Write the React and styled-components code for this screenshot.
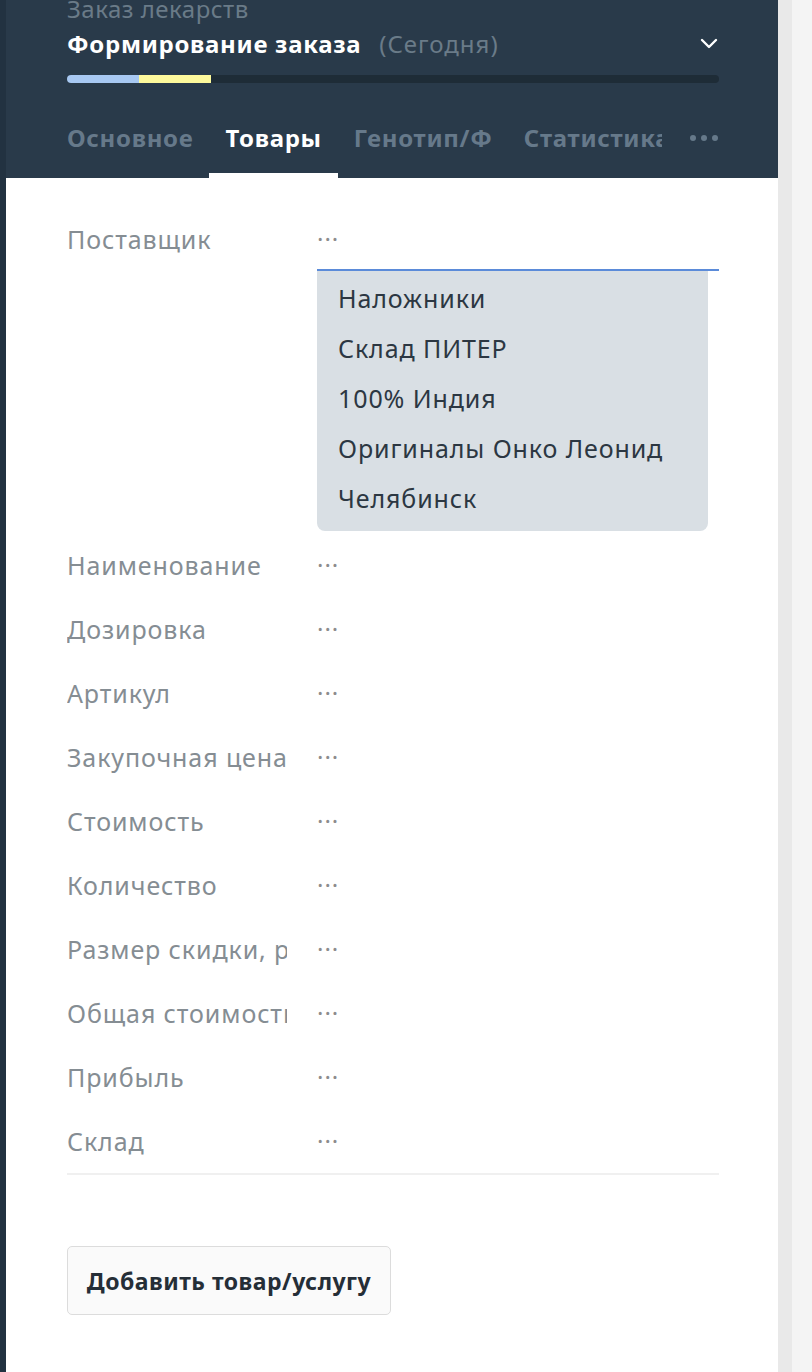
import React from 'react'
import styled, { createGlobalStyle } from 'styled-components'

const GlobalStyle = createGlobalStyle`
  body {
    margin: 0;
    background: #f4f4f4;
    font-family: "Noto Sans", "Open Sans", sans-serif;
  }
`

const Page = styled.div`
  display: flex;
  min-height: 1372px;
  overflow: hidden;
`

const LeftStrip = styled.div`
  width: 6px;
  flex-shrink: 0;
  background: #223241;
`

const Main = styled.div`
  width: 772px;
  flex-shrink: 0;
  background: #ffffff;
`

const Gutter = styled.div`
  flex: 1;
  background: #f4f4f4;
  border-left: 14px solid #e9e9e9;
`

const Header = styled.div`
  background: #293a4a;
  padding: 0 59px 0 61px;
  height: 178px;
  box-sizing: border-box;
  overflow: hidden;
`

const Subtitle = styled.div`
  margin-top: -9px;
  font-size: 24px;
  line-height: 35px;
  letter-spacing: 0.5px;
  color: #6a7b88;
`

const TitleRow = styled.div`
  display: flex;
  align-items: center;
  height: 35px;
`

const Title = styled.span`
  font-size: 24px;
  font-weight: 700;
  letter-spacing: 0.7px;
  color: #ffffff;
`

const TitleDate = styled.span`
  margin-left: 18px;
  font-size: 24px;
  letter-spacing: 1px;
  color: #6a7b88;
`

const Chevron = styled.svg`
  margin-left: auto;
  margin-right: 1px;
  width: 18px;
  height: 18px;
`

const Progress = styled.div`
  display: flex;
  height: 8px;
  margin-top: 14px;
  border-radius: 4px;
  background: #1e2c37;
  overflow: hidden;
`

const Segment = styled.div`
  width: 72px;
  background: ${p => p.$color};
`

const TabBar = styled.div`
  display: flex;
  align-items: flex-start;
  margin-top: 37px;
  margin-left: -16px;
`

const Tab = styled.div`
  padding: 0 16px 18px;
  border-bottom: 5px solid ${p => (p.$active ? '#ffffff' : 'transparent')};
  font-size: 24px;
  font-weight: 700;
  line-height: 35px;
  letter-spacing: 0.7px;
  color: ${p => (p.$active ? '#ffffff' : '#66798a')};
`

const TabLabel = styled.div`
  max-width: 138px;
  white-space: nowrap;
  overflow: hidden;
  text-overflow: clip;
`

const More = styled.div`
  margin-left: auto;
  display: flex;
  gap: 5px;
  height: 35px;
  align-items: center;
  margin-right: 1px;
`

const MoreDot = styled.span`
  width: 6px;
  height: 6px;
  border-radius: 50%;
  background: #66798a;
`

const Content = styled.div`
  padding: 29px 59px 0 61px;
`

const FieldList = styled.div`
  border-bottom: 2px solid #f0f0f0;
`

const Row = styled.div`
  display: grid;
  grid-template-columns: 220px 1fr;
  column-gap: 30px;
  align-items: start;
`

const Label = styled.div`
  height: 64px;
  line-height: 64px;
  font-size: 25px;
  letter-spacing: 0.9px;
  color: #858d93;
  white-space: nowrap;
  overflow: hidden;
`

const Value = styled.div`
  height: ${p => (p.$focused ? '62px' : '64px')};
  line-height: 64px;
  font-size: 24px;
  color: #8c8c8c;
  letter-spacing: 1px;
  border-bottom: ${p => (p.$focused ? '2px solid #5b8bd9' : 'none')};
`

const Dropdown = styled.div`
  width: 391px;
  box-sizing: border-box;
  margin-bottom: 2px;
  padding: 2px 0 8px 21px;
  background: #d9dfe4;
  border-radius: 0 0 8px 8px;
`

const Option = styled.div`
  height: 50px;
  line-height: 50px;
  font-size: 25px;
  letter-spacing: 0.9px;
  color: #2c3742;
  white-space: nowrap;
`

const AddButton = styled.button`
  margin-top: 71px;
  width: 324px;
  height: 69px;
  padding: 0;
  border: 1px solid #dcdcdc;
  border-radius: 5px;
  background: #fafafa;
  font-family: "Noto Sans", "Open Sans", sans-serif;
  font-size: 23px;
  font-weight: 700;
  letter-spacing: 0.5px;
  color: #252e37;
  cursor: pointer;
`

const tabs = ['Основное', 'Товары', 'Генотип/Фенотип', 'Статистика']

const suppliers = ['Наложники', 'Склад ПИТЕР', '100% Индия', 'Оригиналы Онко Леонид', 'Челябинск']

const fields = [
  'Наименование',
  'Дозировка',
  'Артикул',
  'Закупочная цена',
  'Стоимость',
  'Количество',
  'Размер скидки, руб',
  'Общая стоимость',
  'Прибыль',
  'Склад',
]

export default function App() {
  return (
    <>
      <GlobalStyle />
      <Page>
        <LeftStrip />
        <Main>
          <Header>
            <Subtitle>Заказ лекарств</Subtitle>
            <TitleRow>
              <Title>Формирование заказа</Title>
              <TitleDate>(Сегодня)</TitleDate>
              <Chevron viewBox="0 0 18 18" fill="none">
                <polyline points="2,5 9,12 16,5" stroke="#ffffff" strokeWidth="2.4" strokeLinecap="round" strokeLinejoin="round" />
              </Chevron>
            </TitleRow>
            <Progress>
              <Segment $color="#a7c8f2" />
              <Segment $color="#fdf99c" />
            </Progress>
            <TabBar>
              {tabs.map(t => (
                <Tab key={t} $active={t === 'Товары'}>
                  <TabLabel>{t}</TabLabel>
                </Tab>
              ))}
              <More>
                <MoreDot />
                <MoreDot />
                <MoreDot />
              </More>
            </TabBar>
          </Header>

          <Content>
            <FieldList>
              <Row>
                <Label>Поставщик</Label>
                <div>
                  <Value $focused>···</Value>
                  <Dropdown>
                    {suppliers.map(s => (
                      <Option key={s}>{s}</Option>
                    ))}
                  </Dropdown>
                </div>
              </Row>
              {fields.map(f => (
                <Row key={f}>
                  <Label>{f}</Label>
                  <Value>···</Value>
                </Row>
              ))}
            </FieldList>
            <AddButton>Добавить товар/услугу</AddButton>
          </Content>
        </Main>
        <Gutter />
      </Page>
    </>
  )
}
